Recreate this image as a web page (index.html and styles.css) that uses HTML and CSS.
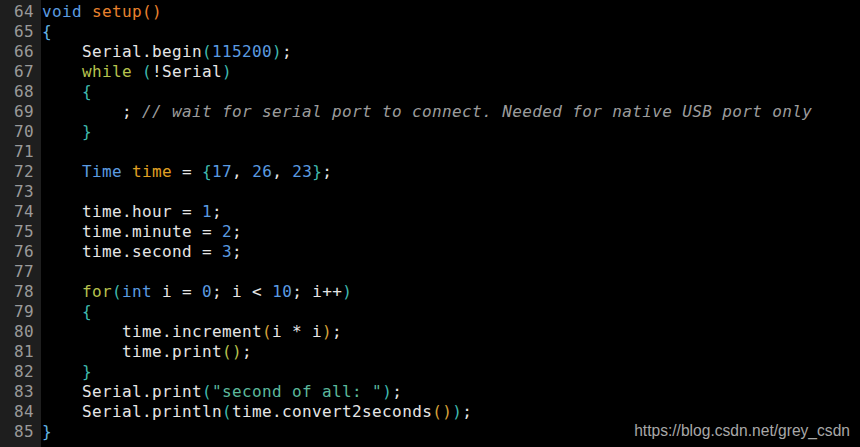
FILE: index.html
```html
<!DOCTYPE html>
<html>
<head>
<meta charset="utf-8">
<link rel="stylesheet" href="styles.css">
</head>
<body>
<div class="editor">
<div class="gutter">
<div>64</div><div>65</div><div>66</div><div>67</div><div>68</div><div>69</div><div>70</div><div>71</div><div>72</div><div>73</div><div>74</div><div>75</div><div>76</div><div>77</div><div>78</div><div>79</div><div>80</div><div>81</div><div>82</div><div>83</div><div>84</div><div>85</div>
</div>
<div class="code">
<div class="ln"><span class="kw">void</span> <span class="fn">setup()</span></div>
<div class="ln"><span class="b0">{</span></div>
<div class="ln">    Serial.begin<span class="b1">(</span><span class="num">115200</span><span class="b1">)</span>;</div>
<div class="ln">    <span class="ctl">while</span> <span class="b1">(</span>!Serial<span class="b1">)</span></div>
<div class="ln">    <span class="b1">{</span></div>
<div class="ln">        ; <span class="cm">// wait for serial port to connect. Needed for native USB port only</span></div>
<div class="ln">    <span class="b1">}</span></div>
<div class="ln"> </div>
<div class="ln">    <span class="kw">Time</span> <span class="var">time</span> = <span class="b1">{</span><span class="num">17</span>, <span class="num">26</span>, <span class="num">23</span><span class="b1">}</span>;</div>
<div class="ln"> </div>
<div class="ln">    time.hour = <span class="num">1</span>;</div>
<div class="ln">    time.minute = <span class="num">2</span>;</div>
<div class="ln">    time.second = <span class="num">3</span>;</div>
<div class="ln"> </div>
<div class="ln">    <span class="ctl">for</span><span class="b1">(</span><span class="kw">int</span> i = <span class="num">0</span>; i &lt; <span class="num">10</span>; i++<span class="b1">)</span></div>
<div class="ln">    <span class="b1">{</span></div>
<div class="ln">        time.increment<span class="b2">(</span>i * i<span class="b2">)</span>;</div>
<div class="ln">        time.print<span class="b3">()</span>;</div>
<div class="ln">    <span class="b1">}</span></div>
<div class="ln">    Serial.print<span class="b1">(</span><span class="str">"second of all: "</span><span class="b1">)</span>;</div>
<div class="ln">    Serial.println<span class="b1">(</span>time.convert2seconds<span class="b2">()</span><span class="b1">)</span>;</div>
<div class="ln"><span class="b0">}</span></div>
</div>
<div class="watermark">https://blog.csdn.net/grey_csdn</div>
</div>
</body>
</html>
```
FILE: styles.css
```css
html, body {
  margin: 0;
  padding: 0;
  background: #000;
}
.editor {
  position: relative;
  display: flex;
  width: 860px;
  height: 447px;
  overflow: hidden;
  background: #000;
  font-family: "DejaVu Sans Mono", monospace;
  font-size: 16px;
  letter-spacing: 0.37px;
  line-height: 20px;
}
.gutter {
  width: 41px;
  box-sizing: border-box;
  padding: 2px 7px 0 0;
  background: #1e1e1e;
  color: #9a9a9a;
  text-align: right;
}
.code {
  padding: 2px 0 0 1px;
  color: #e6e6e6;
}
.ln {
  height: 20px;
  white-space: pre;
}
.kw { color: #5b9be0; }
.fn { color: #e8822e; }
.var { color: #e0a024; }
.ctl { color: #b6c24e; }
.num { color: #5b9be0; }
.b0 { color: #62b4e6; }
.b1 { color: #3fb9ae; }
.b2 { color: #d6a23a; }
.b3 { color: #b6c24e; }
.str { color: #5cb89c; }
.cm { color: #9c9c9c; font-style: italic; }
.watermark {
  position: absolute;
  right: 10px;
  bottom: 6px;
  font-family: "Liberation Sans", Arial, sans-serif;
  font-size: 15.6px;
  letter-spacing: 0;
  color: #a8a8a8;
}
```
